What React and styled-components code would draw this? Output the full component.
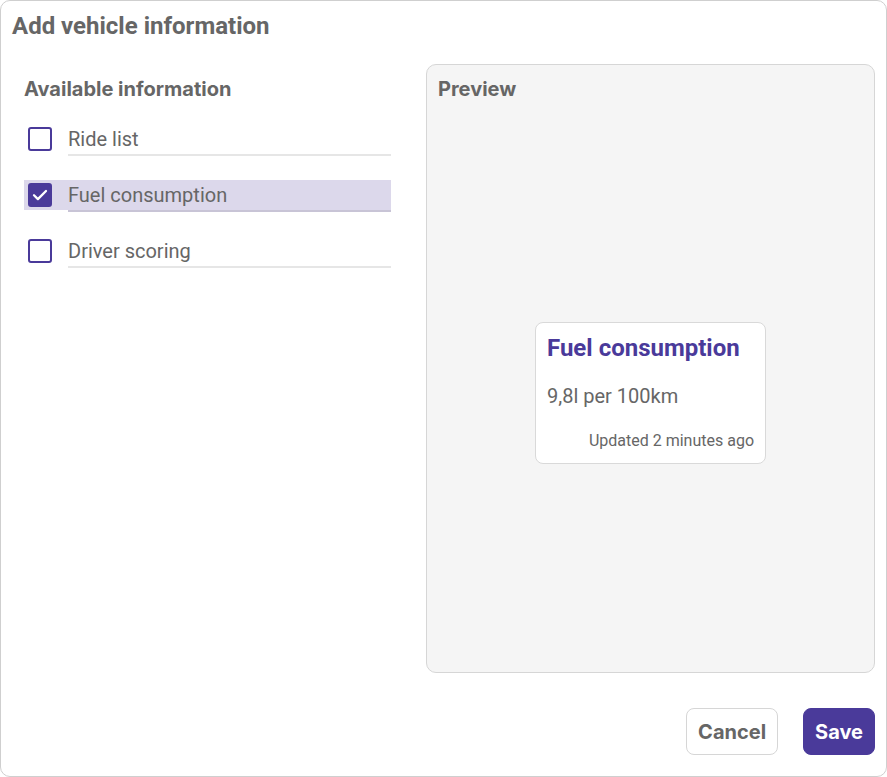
import React, { useState } from "react";
import styled, { createGlobalStyle } from "styled-components";

const GlobalStyle = createGlobalStyle`
  html, body {
    margin: 0;
    padding: 0;
    background: #ffffff;
  }
  * {
    box-sizing: border-box;
  }
`;

const purple = "#4a3a9a";
const grey = "#666666";

const items = [
  { id: "rides", label: "Ride list" },
  { id: "fuel", label: "Fuel consumption" },
  { id: "score", label: "Driver scoring" },
];

function CheckIcon() {
  return (
    <svg width="16" height="16" viewBox="0 0 16 16" fill="none">
      <path
        d="M2 8.3l3.9 3.8L14 4"
        stroke="#ffffff"
        strokeWidth="2.3"
        strokeLinecap="round"
        strokeLinejoin="round"
      />
    </svg>
  );
}

export default function App() {
  const [checked, setChecked] = useState({ fuel: true });

  return (
    <>
      <GlobalStyle />
      <Dialog>
        <Title>Add vehicle information</Title>
        <Body>
          <Column>
            <Heading>Available information</Heading>
            <List>
              {items.map((item) => (
                <Row
                  key={item.id}
                  $active={checked[item.id]}
                  onClick={() =>
                    setChecked({ ...checked, [item.id]: !checked[item.id] })
                  }
                >
                  <Box $active={checked[item.id]}>
                    {checked[item.id] && <CheckIcon />}
                  </Box>
                  <Label $active={checked[item.id]}>{item.label}</Label>
                </Row>
              ))}
            </List>
          </Column>
          <Preview>
            <PreviewHead>Preview</PreviewHead>
            <PreviewArea>
              <Card>
                <CardTitle>Fuel consumption</CardTitle>
                <CardValue>9,8l per 100km</CardValue>
                <CardMeta>Updated 2 minutes ago</CardMeta>
              </Card>
            </PreviewArea>
          </Preview>
        </Body>
        <Footer>
          <Button>Cancel</Button>
          <Button $primary>Save</Button>
        </Footer>
      </Dialog>
    </>
  );
}

const Dialog = styled.div`
  width: 887px;
  height: 777px;
  border: 1px solid #cfcfcf;
  border-radius: 10px;
  padding: 11px 11px 21px 11px;
  display: flex;
  flex-direction: column;
  font-family: Roboto, "Liberation Sans", sans-serif;
  color: ${grey};
`;

const Title = styled.h1`
  margin: 0 0 24px 0;
  font-size: 24px;
  line-height: 28px;
  font-weight: 700;
  color: ${grey};
`;

const Body = styled.div`
  flex: 1;
  display: grid;
  grid-template-columns: 379px 1fr;
  column-gap: 35px;
  min-height: 0;
`;

const Column = styled.div`
  padding-left: 12px;
  padding-top: 13px;
`;

const Heading = styled.h2`
  margin: 0;
  font-family: Inter, "Liberation Sans", sans-serif;
  font-size: 20px;
  line-height: 24px;
  font-weight: 700;
  color: ${grey};
`;

const List = styled.div`
  margin-top: 23px;
  display: flex;
  flex-direction: column;
  gap: 26px;
`;

const Row = styled.div`
  height: 30px;
  display: flex;
  align-items: flex-start;
  gap: 16px;
  padding-left: 4px;
  background: ${(p) => (p.$active ? "#dcd8eb" : "transparent")};
  cursor: pointer;
`;

const Box = styled.span`
  width: 24px;
  height: 24px;
  margin-top: 3px;
  flex: none;
  border: 2px solid ${purple};
  border-radius: 3px;
  background: ${(p) => (p.$active ? purple : "#ffffff")};
  display: flex;
  align-items: center;
  justify-content: center;
`;

const Label = styled.span`
  flex: 1;
  height: 32px;
  font-size: 20px;
  line-height: 31px;
  color: ${grey};
  border-bottom: 2px solid ${(p) => (p.$active ? "#c8c4d6" : "#e6e6e6")};
`;

const Preview = styled.div`
  display: flex;
  flex-direction: column;
  background: #f5f5f5;
  border: 1px solid #d6d6d6;
  border-radius: 10px;
`;

const PreviewHead = styled.h2`
  margin: 0;
  padding: 12px 11px;
  font-family: Inter, "Liberation Sans", sans-serif;
  font-size: 20px;
  line-height: 24px;
  font-weight: 700;
  color: ${grey};
`;

const PreviewArea = styled.div`
  flex: 1;
  display: flex;
  align-items: center;
  justify-content: center;
`;

const Card = styled.div`
  width: 231px;
  height: 142px;
  background: #ffffff;
  border: 1px solid #d9d9d9;
  border-radius: 8px;
  padding: 11px 11px 0 11px;
  display: flex;
  flex-direction: column;
`;

const CardTitle = styled.div`
  font-size: 24px;
  line-height: 28px;
  font-weight: 700;
  color: ${purple};
`;

const CardValue = styled.div`
  margin-top: 22px;
  font-size: 20px;
  line-height: 24px;
  color: ${grey};
`;

const CardMeta = styled.div`
  margin-top: 23px;
  text-align: right;
  font-size: 16px;
  line-height: 20px;
  color: ${grey};
`;

const Footer = styled.div`
  margin-top: 35px;
  display: flex;
  justify-content: flex-end;
  gap: 25px;
`;

const Button = styled.button`
  height: 47px;
  padding: 0 11px;
  border-radius: 8px;
  border: 1px solid ${(p) => (p.$primary ? purple : "#d6d6d6")};
  background: ${(p) => (p.$primary ? purple : "#ffffff")};
  color: ${(p) => (p.$primary ? "#ffffff" : grey)};
  font-family: Inter, "Liberation Sans", sans-serif;
  font-size: 20px;
  font-weight: 700;
  cursor: pointer;
`;
